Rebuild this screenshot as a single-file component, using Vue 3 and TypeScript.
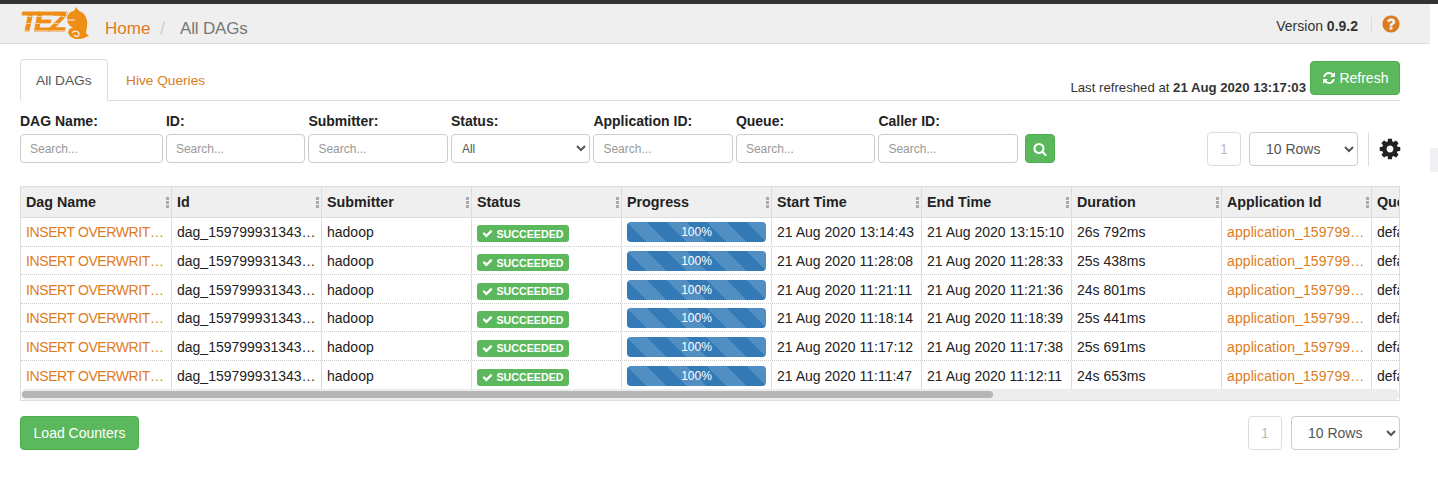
<template>
  <div class="page">
    <div class="top-strip"></div>
    <div class="side-block"></div>
    <header class="nav">
      <div class="logo">
        <span class="logo-text">TEZ</span>
        <svg class="logo-mark" viewBox="0 0 24 32">
          <path d="M10 0C11 3 14 4 17 6C20 9 22 14 21 18C21 22 20 24 20 26L23 29L20 30C17 32 11 33 7 31C3 29 1 26 3 23C5 20 7 21 9 22C5 20 1 17 1 12C1 7 5 4 8 4Z" fill="#ef8e14" />
          <path d="M0 13H9M6 26C8 23 13 24 13 27S9 30 8 28" fill="none" stroke="#f4f4f4" stroke-width="1.1" />
        </svg>
      </div>
      <nav class="crumbs">
        <a class="link">Home</a>
        <span class="slash">/</span>
        <span class="current">All DAGs</span>
      </nav>
      <div class="version">Version <b>0.9.2</b></div>
      <span class="nav-sep"></span>
      <svg class="help" viewBox="0 0 1792 1792"><path :d="icons.help" /></svg>
    </header>

    <main class="content">
      <div class="tabs">
        <a class="tab active">All DAGs</a>
        <a class="tab link">Hive Queries</a>
        <span class="refreshed">Last refreshed at <b>21 Aug 2020 13:17:03</b></span>
        <button class="btn refresh">
          <svg class="btn-icon" viewBox="0 0 1792 1792"><path :d="icons.refresh" /></svg>
          Refresh
        </button>
      </div>

      <div class="filters">
        <div v-for="f in filters" :key="f.label" class="filter" :class="{ wide: f.label === 'DAG Name:' }">
          <label>{{ f.label }}</label>
          <select v-if="f.select" class="field status-select">
            <option>All</option>
          </select>
          <input v-else class="field" placeholder="Search..." />
        </div>
        <button class="btn search">
          <svg class="search-icon" viewBox="0 0 1792 1792"><path :d="icons.search" /></svg>
        </button>
        <div class="pager top">
          <span class="page-num">1</span>
          <select class="rows"><option>10 Rows</option></select>
          <span class="divider"></span>
          <svg class="gear" viewBox="0 0 1792 1792"><path :d="icons.cog" /></svg>
        </div>
      </div>

      <div class="table">
        <div class="grid head">
          <div v-for="c in columns" :key="c" class="th">
            <span>{{ c }}</span>
            <i class="grip"></i>
          </div>
        </div>
        <div v-for="(r, i) in rows" :key="i" class="grid row">
          <div class="td"><a class="link cut caps">INSERT OVERWRITE TABLE</a></div>
          <div class="td"><span class="cut">dag_1597999313430_0001</span></div>
          <div class="td">hadoop</div>
          <div class="td">
            <span class="badge">
              <svg class="check" viewBox="0 0 1792 1792"><path :d="icons.check" /></svg>
              SUCCEEDED
            </span>
          </div>
          <div class="td"><div class="progress">100%</div></div>
          <div class="td">{{ r[0] }}</div>
          <div class="td">{{ r[1] }}</div>
          <div class="td">{{ r[2] }}</div>
          <div class="td"><a class="link cut app">application_1597999313430</a></div>
          <div class="td last">default</div>
        </div>
        <div class="scroll"><div class="thumb"></div></div>
      </div>

      <div class="bottom">
        <button class="btn load">Load Counters</button>
        <div class="pager low">
          <span class="page-num">1</span>
          <select class="rows"><option>10 Rows</option></select>
        </div>
      </div>
    </main>
  </div>
</template>

<script setup lang="ts">
const icons = {
  help: 'M1024 1376v-192q0-14-9-23t-23-9h-192q-14 0-23 9t-9 23v192q0 14 9 23t23 9h192q14 0 23-9t9-23zm256-672q0-88-55.5-163t-138.5-116-170-41q-243 0-371 213-15 24 8 42l132 100q7 6 19 6 16 0 25-12 53-68 86-92 34-24 86-24 48 0 85.5 26t37.5 59q0 38-20 61t-68 45q-63 28-115.5 86.5t-52.5 125.5v36q0 14 9 23t23 9h192q14 0 23-9t9-23q0-19 21.5-49.5t54.5-49.5q32-18 49-28.5t46-35 44.5-48 28-60.5 12.5-81zm384 192q0 209-103 385.5t-279.5 279.5-385.5 103-385.5-103-279.5-279.5-103-385.5 103-385.5 279.5-279.5 385.5-103 385.5 103 279.5 279.5 103 385.5z',
  refresh: 'M1639 1056q0 5-1 7-64 268-268 434.5t-478 166.5q-146 0-282.5-55t-243.5-157l-129 129q-19 19-45 19t-45-19-19-45v-448q0-26 19-45t45-19h448q26 0 45 19t19 45-19 45l-137 137q71 66 161 102t187 36q134 0 250-65t186-179q11-17 53-117 8-23 30-23h192q13 0 22.5 9.5t9.5 22.5zm25-800v448q0 26-19 45t-45 19h-448q-26 0-45-19t-19-45 19-45l138-138q-148-137-349-137-134 0-250 65t-186 179q-11 17-53 117-8 23-30 23h-199q-13 0-22.5-9.5t-9.5-22.5v-7q65-268 270-434.5t480-166.5q146 0 284 55.5t245 156.5l130-129q19-19 45-19t45 19 19 45z',
  search: 'M1216 832q0-185-131.5-316.5t-316.5-131.5-316.5 131.5-131.5 316.5 131.5 316.5 316.5 131.5 316.5-131.5 131.5-316.5zm512 832q0 52-38 90t-90 38q-54 0-90-38l-343-342q-179 124-399 124-143 0-273.5-55.5t-225-150-150-225-55.5-273.5 55.5-273.5 150-225 225-150 273.5-55.5 273.5 55.5 225 150 150 225 55.5 273.5q0 220-124 399l343 343q37 37 37 90z',
  cog: 'M1152 896q0-106-75-181t-181-75-181 75-75 181 75 181 181 75 181-75 75-181zm512-109v222q0 12-8 23t-20 13l-185 28q-19 54-39 91 35 50 107 138 10 12 10 25t-9 23q-27 37-99 108t-94 71q-12 0-26-9l-138-108q-44 23-91 38-16 136-29 186-7 28-36 28h-222q-14 0-24.5-8.5t-11.5-21.5l-28-184q-49-16-90-37l-141 107q-10 9-25 9-14 0-25-11-126-114-165-168-7-10-7-23 0-12 8-23 15-21 51-66.5t54-70.5q-27-50-41-99l-183-27q-13-2-21-12.5t-8-23.5v-222q0-12 8-23t19-13l186-28q14-46 39-92-40-57-107-138-10-12-10-24 0-10 9-23 26-36 98.5-107.5t94.5-71.5q13 0 26 10l138 107q44-23 91-38 16-136 29-186 7-28 36-28h222q14 0 24.5 8.5t11.5 21.5l28 184q49 16 90 37l142-107q9-9 24-9 13 0 25 10 129 119 165 170 7 8 7 22 0 12-8 23-15 21-51 66.5t-54 70.5q26 50 41 98l183 28q13 2 21 12.5t8 23.5z',
  check: 'M1671 566q0 40-28 68l-724 724-136 136q-28 28-68 28t-68-28l-136-136-362-362q-28-28-28-68t28-68l136-136q28-28 68-28t68 28l294 295 656-657q28-28 68-28t68 28l136 136q28 28 28 68z',
}

const filters = [
  { label: 'DAG Name:' },
  { label: 'ID:' },
  { label: 'Submitter:' },
  { label: 'Status:', select: true },
  { label: 'Application ID:' },
  { label: 'Queue:' },
  { label: 'Caller ID:' },
]

const columns = ['Dag Name', 'Id', 'Submitter', 'Status', 'Progress', 'Start Time', 'End Time', 'Duration', 'Application Id', 'Queue']

const rows = [
  ['21 Aug 2020 13:14:43', '21 Aug 2020 13:15:10', '26s 792ms'],
  ['21 Aug 2020 11:28:08', '21 Aug 2020 11:28:33', '25s 438ms'],
  ['21 Aug 2020 11:21:11', '21 Aug 2020 11:21:36', '24s 801ms'],
  ['21 Aug 2020 11:18:14', '21 Aug 2020 11:18:39', '25s 441ms'],
  ['21 Aug 2020 11:17:12', '21 Aug 2020 11:17:38', '25s 691ms'],
  ['21 Aug 2020 11:11:47', '21 Aug 2020 11:12:11', '24s 653ms'],
]
</script>

<style>
html,
body {
  margin: 0;
  background: #fff;
  overflow: hidden;
}
</style>

<style scoped>
.page {
  position: relative;
  width: 1430px;
  font-family: "Liberation Sans", Arial, sans-serif;
  font-size: 14px;
  color: #333;
}

.top-strip {
  width: 1438px;
  height: 4px;
  background: #333;
}

.side-block {
  position: absolute;
  left: 1430px;
  top: 148px;
  width: 8px;
  height: 24px;
  background: #eef0f3;
}

.link {
  color: #dd7c1e;
}

.nav {
  height: 40px;
  box-sizing: border-box;
  display: flex;
  align-items: center;
  padding: 0 30px 0 20px;
  background: #efefef;
  border-bottom: 1px solid #ddd;
}

.logo {
  display: flex;
  align-items: flex-start;
  width: 85px;
  height: 39px;
}

.logo-text {
  width: 46px;
  margin-top: 6px;
  font-size: 28px;
  line-height: 24px;
  font-weight: 700;
  font-style: italic;
  letter-spacing: -3px;
  color: transparent;
  -webkit-text-stroke: 0.5px #ef8e14;
  background: repeating-linear-gradient(#ef8e14 0 6px, #f7d3a4 6px 7px);
  -webkit-background-clip: text;
  background-clip: text;
}

.logo-mark {
  width: 24px;
  height: 32px;
  margin-top: 3px;
}

.crumbs {
  display: flex;
  gap: 9px;
  margin-top: 11px;
  font-size: 17px;
}

.slash {
  color: #ccc;
  margin: 0 6px 0 1px;
}

.current {
  color: #777;
  letter-spacing: -0.2px;
}

.version {
  margin-left: auto;
  margin-top: 5px;
  line-height: 16px;
}

.nav-sep {
  width: 1px;
  height: 15px;
  margin: 1px 0 0 13px;
  background: #ddd;
}

.help {
  width: 20px;
  height: 20px;
  margin: 1px -1px 0 9px;
  fill: #dd7c1e;
}

.content {
  padding: 15px 30px 0 20px;
}

.tabs {
  height: 41px;
  display: flex;
  align-items: flex-start;
  border-bottom: 1px solid #ddd;
}

.tab {
  height: 42px;
  box-sizing: border-box;
  padding: 13px 18px 0 15px;
  font-size: 13.7px;
  line-height: 16px;
  white-space: nowrap;
  border: 1px solid transparent;
}

.tab.active {
  width: 88px;
  color: #555;
  background: #fff;
  border-color: #ddd;
  border-bottom-color: #fff;
  border-radius: 4px 4px 0 0;
}

.tab.link {
  padding-left: 17px;
}

.refreshed {
  margin: 21px 4px 0 auto;
  font-size: 13.2px;
  line-height: 16px;
}

.btn {
  font-family: inherit;
  font-size: 14px;
  color: #fff;
  background: #5cb85c;
  border: 1px solid #4cae4c;
  border-radius: 4px;
  padding: 0;
}

.refresh {
  width: 90px;
  height: 34px;
  margin-top: 2px;
}

.btn-icon {
  width: 14px;
  height: 14px;
  fill: #fff;
  vertical-align: -2px;
}

.filters {
  display: flex;
  align-items: flex-start;
  gap: 3px;
  padding-top: 12px;
}

.filter {
  width: 139.5px;
  display: flex;
  flex-direction: column;
}

.filter.wide {
  width: 142.9px;
}

.filter label {
  font-weight: 700;
  line-height: 16px;
  margin-bottom: 5px;
  color: #222;
}

.field {
  height: 29px;
  box-sizing: border-box;
  padding: 0 9px;
  font-family: inherit;
  font-size: 12px;
  color: #555;
  background: #fff;
  border: 1px solid #ccc;
  border-radius: 4px;
  outline: none;
}

.field::placeholder {
  color: #999;
  opacity: 1;
}

.status-select {
  padding: 0 6px;
}

.search {
  width: 30px;
  height: 29px;
  margin: 21px 0 0 4px;
  display: flex;
  align-items: center;
  justify-content: center;
}

.search-icon {
  width: 14px;
  height: 14px;
  fill: #fff;
}

.pager {
  display: flex;
  align-items: center;
  gap: 8px;
}

.pager.top {
  margin: 19px 0 0 auto;
}

.pager.low {
  gap: 9px;
}

.page-num {
  width: 34px;
  height: 34px;
  box-sizing: border-box;
  text-align: center;
  line-height: 32px;
  color: #bbb;
  border: 1px solid #ddd;
  border-radius: 4px;
}

.rows {
  width: 109px;
  height: 34px;
  box-sizing: border-box;
  padding: 0 12px;
  font-family: inherit;
  font-size: 14px;
  color: #555;
  background: #fff;
  border: 1px solid #ccc;
  border-radius: 4px;
}

.divider {
  width: 1px;
  height: 34px;
  margin-left: 2px;
  background: #ddd;
}

.gear {
  width: 24px;
  height: 24px;
  margin: 0 -2px 0 1px;
  fill: #222;
}

.table {
  margin-top: 20px;
  width: 1380px;
  box-sizing: border-box;
  border: 1px solid #ddd;
  overflow: hidden;
}

.grid {
  display: grid;
  grid-template-columns: 151px repeat(9, 150px);
  width: 1500px;
}

.head {
  height: 31px;
  box-sizing: border-box;
  background: #efefef;
  border-bottom: 1px solid #ddd;
}

.th {
  display: flex;
  align-items: center;
  justify-content: space-between;
  padding: 0 2px 0 5px;
  border-right: 1px solid #ddd;
  font-size: 14.3px;
  font-weight: 700;
  color: #222;
}

.grip {
  width: 3px;
  height: 11px;
  background: repeating-linear-gradient(#aaa 0 3px, transparent 3px 4px);
}

.row {
  height: 28.5px;
  box-sizing: border-box;
  border-bottom: 1px dotted #ccc;
}

.row:nth-last-child(2) {
  border-bottom: 0;
}

.td {
  display: flex;
  align-items: center;
  min-width: 0;
  padding: 2px 5px 0;
  border-right: 1px solid #ddd;
  color: #222;
  white-space: nowrap;
}

.head + .row .td {
  padding-top: 1px;
}

.last {
  border-right: 0;
}

.cut {
  display: block;
  overflow: hidden;
  text-overflow: ellipsis;
  white-space: nowrap;
}

.caps {
  letter-spacing: -0.4px;
}

.app {
  margin-right: -3px;
  letter-spacing: 0.1px;
}

.badge {
  width: 92px;
  height: 17px;
  margin-top: 3px;
  display: flex;
  align-items: center;
  justify-content: center;
  gap: 3px;
  font-size: 10.7px;
  font-weight: 700;
  color: #fff;
  background: #5cb85c;
  border-radius: 3px;
}

.check {
  width: 11px;
  height: 11px;
  fill: #fff;
}

.progress {
  width: 139px;
  height: 20px;
  text-align: center;
  font-size: 12px;
  line-height: 20px;
  color: #fff;
  border-radius: 4px;
  background-color: #337ab7;
  background-image: linear-gradient(45deg, rgba(255, 255, 255, 0.15) 25%, transparent 25%, transparent 50%, rgba(255, 255, 255, 0.15) 50%, rgba(255, 255, 255, 0.15) 75%, transparent 75%);
  background-size: 40px 40px;
}

.scroll {
  height: 11px;
  box-sizing: border-box;
  padding: 2px 2px 2px 1px;
  background: #ececec;
  border-radius: 5px;
}

.thumb {
  width: 971px;
  height: 7px;
  background: #b5b5b5;
  border-radius: 4px;
}

.bottom {
  display: flex;
  justify-content: space-between;
  margin-top: 15px;
}

.load {
  width: 119px;
  height: 34px;
}
</style>
